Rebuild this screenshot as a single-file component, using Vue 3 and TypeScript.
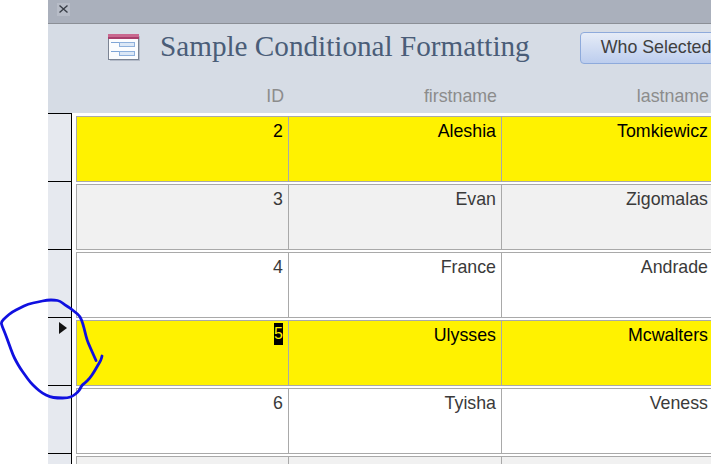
<script setup lang="ts">
interface Person {
  id: number | null
  first: string
  last: string
  tone: 'hit' | 'alt' | 'plain'
  current?: boolean
}

const people: Person[] = [
  { id: 2, first: 'Aleshia', last: 'Tomkiewicz', tone: 'hit' },
  { id: 3, first: 'Evan', last: 'Zigomalas', tone: 'alt' },
  { id: 4, first: 'France', last: 'Andrade', tone: 'plain' },
  { id: 5, first: 'Ulysses', last: 'Mcwalters', tone: 'hit', current: true },
  { id: 6, first: 'Tyisha', last: 'Veness', tone: 'plain' },
  // the next record is only a sliver at the window edge
  { id: null, first: '', last: '', tone: 'alt' }
]

// hand-drawn circle round the current record marker
const scribblePoints: [number, number][] = [
  [102, 356], [101, 360], [98, 365], [94, 372], [90, 378], [85, 383], [82, 385], [80, 389], [78, 392],
  [73, 396], [68, 398], [57, 398], [50, 397], [42, 393], [36, 388], [30, 382], [25, 375], [20, 368],
  [16, 361], [13, 355], [9, 344], [5, 333], [2, 326], [1, 322], [6, 317], [12, 312], [20, 308],
  [28, 304], [38, 302], [47, 300], [55, 300], [60, 301], [65, 305], [70, 308], [75, 312], [80, 316],
  [83, 324], [85, 332], [87, 340], [90, 347], [94, 356], [98, 365]
]

const scribble = scribblePoints
  .map(([x, y], i) => {
    if (i === 0) return `M${x} ${y}`
    const [px, py] = scribblePoints[i - 1]
    return `Q${px} ${py} ${(px + x) / 2} ${(py + y) / 2}`
  })
  .join(' ')
</script>

<template>
  <div class="page">
    <div class="window">
      <div class="tabbar">
        <span class="close">
          <svg width="13" height="13" viewBox="0 0 13 13">
            <path d="M2.5 2.5 L10.5 9.5 M10.5 2.5 L2.5 9.5" stroke="#3a3f48" stroke-width="1.4" fill="none" />
          </svg>
        </span>
      </div>
      <header class="head">
        <div class="titlerow">
          <svg class="formicon" width="32" height="27" viewBox="0 0 32 27">
            <rect x="2" y="2" width="30" height="25" fill="#8b93a3" opacity="0.45" />
            <rect x="0.5" y="0.5" width="30" height="25" fill="#fbfcfe" stroke="#7b8494" />
            <rect x="0" y="0" width="31" height="5" fill="#c9688f" />
            <rect x="0" y="3" width="31" height="2" fill="#a83f6c" />
            <path d="M3 8.5 H11 M3 17.5 H11" stroke="#7fa5d6" />
            <rect x="11.5" y="8.5" width="15" height="4" fill="#dbe7f6" stroke="#8eb0dc" />
            <rect x="11.5" y="17.5" width="15" height="4" fill="#dbe7f6" stroke="#8eb0dc" />
          </svg>
          <h1 class="title">Sample Conditional Formatting</h1>
          <button class="who">Who Selected</button>
        </div>
        <div class="labels">
          <span class="col-id">ID</span>
          <span class="col-first">firstname</span>
          <span class="col-last">lastname</span>
        </div>
      </header>
      <div class="rows">
        <div v-for="(p, i) in people" :key="i" class="row">
          <div class="selector">
            <span v-if="p.current" class="arrow"></span>
          </div>
          <div class="cells" :class="p.tone">
            <div class="cell col-id">
              <span v-if="p.current" class="selected">{{ p.id }}</span>
              <template v-else>{{ p.id }}</template>
            </div>
            <div class="cell col-first">{{ p.first }}</div>
            <div class="cell col-last">{{ p.last }}</div>
          </div>
        </div>
      </div>
    </div>
    <svg class="scribble" width="110" height="110" viewBox="0 290 110 110">
      <path :d="scribble" fill="none" stroke="#1010e0" stroke-width="2.8" stroke-linecap="round" stroke-linejoin="round" />
    </svg>
  </div>
</template>

<style scoped>
.page {
  position: relative;
  width: 711px;
  height: 464px;
  overflow: hidden;
  background: #fff;
  padding-left: 48px;
  box-sizing: border-box;
  font-family: "Liberation Sans", Arial, sans-serif;
}
.window {
  width: 663px;
  overflow: hidden;
}
.tabbar {
  height: 23px;
  background: #aab0bc;
  border-bottom: 1px solid #8b8f96;
  display: flex;
  align-items: flex-start;
  padding: 3px 0 0 9px;
  box-sizing: content-box;
  height: 20px;
}
.close {
  display: flex;
  width: 13px;
  height: 13px;
  background: #b7bcc7;
}
.head {
  height: 89px;
  background: #d6dce5;
  display: flex;
  flex-direction: column;
}
.titlerow {
  display: flex;
  align-items: center;
  height: 47px;
  padding: 0 0 0 60px;
  flex: none;
}
.formicon {
  flex: none;
  margin-right: 20px;
}
.title {
  margin: -2px 0 0;
  font-family: "Liberation Serif", "Times New Roman", serif;
  font-weight: normal;
  font-size: 29.2px;
  color: #4a5d78;
  white-space: nowrap;
}
.who {
  flex: none;
  margin-left: 50px;
  width: 160px;
  height: 32px;
  padding: 0 0 0 20px;
  text-align: left;
  border: 1px solid #8eaadb;
  border-radius: 4px;
  background: linear-gradient(#e6ecf7, #bccdee);
  font: 17.8px "Liberation Sans", Arial, sans-serif;
  color: #3f3f3f;
  white-space: nowrap;
}
.labels {
  display: flex;
  padding-left: 28px;
  margin-top: 16px;
  color: #8c8c8c;
  font-size: 17.8px;
  line-height: 18px;
}
.labels span {
  text-align: right;
  padding-right: 5px;
  box-sizing: border-box;
}
.col-id {
  width: 213px;
  flex: none;
}
.col-first {
  width: 213px;
  flex: none;
}
.col-last {
  width: 212px;
  flex: none;
}
.row {
  display: flex;
  height: 68px;
}
.selector {
  position: relative;
  width: 23px;
  flex: none;
  box-sizing: border-box;
  background: #e6e9ef;
  border-top: 1px solid #000;
}
.rows {
  position: relative;
}
.rows::before {
  content: "";
  position: absolute;
  left: 23px;
  top: 0;
  bottom: 0;
  width: 1px;
  background: #000;
}
.arrow {
  position: absolute;
  left: 11px;
  top: 4px;
  border-left: 8px solid #111;
  border-top: 6.5px solid transparent;
  border-bottom: 6.5px solid transparent;
}
.cells {
  display: flex;
  margin: 3px 0 0 5px;
  height: 65px;
}
.cell {
  box-sizing: border-box;
  height: 66px;
  border: 1px solid #a9a9a9;
  border-left: 0;
  text-align: right;
  padding: 5px 5px 0 0;
  font-size: 17.8px;
  line-height: 18px;
  color: #3a3a3a;
}
.cell:first-child {
  border-left: 1px solid #a9a9a9;
}
.hit .cell {
  background: #fff200;
  color: #000;
}
.alt .cell {
  background: #f1f1f1;
}
.plain .cell {
  background: #fff;
}
.selected {
  display: inline-block;
  vertical-align: top;
  width: 9px;
  height: 22px;
  margin-top: -3px;
  font-size: 16px;
  line-height: 22px;
  text-align: center;
  background: #000;
  color: #fff200;
}
.scribble {
  position: absolute;
  left: 0;
  top: 290px;
}
</style>
